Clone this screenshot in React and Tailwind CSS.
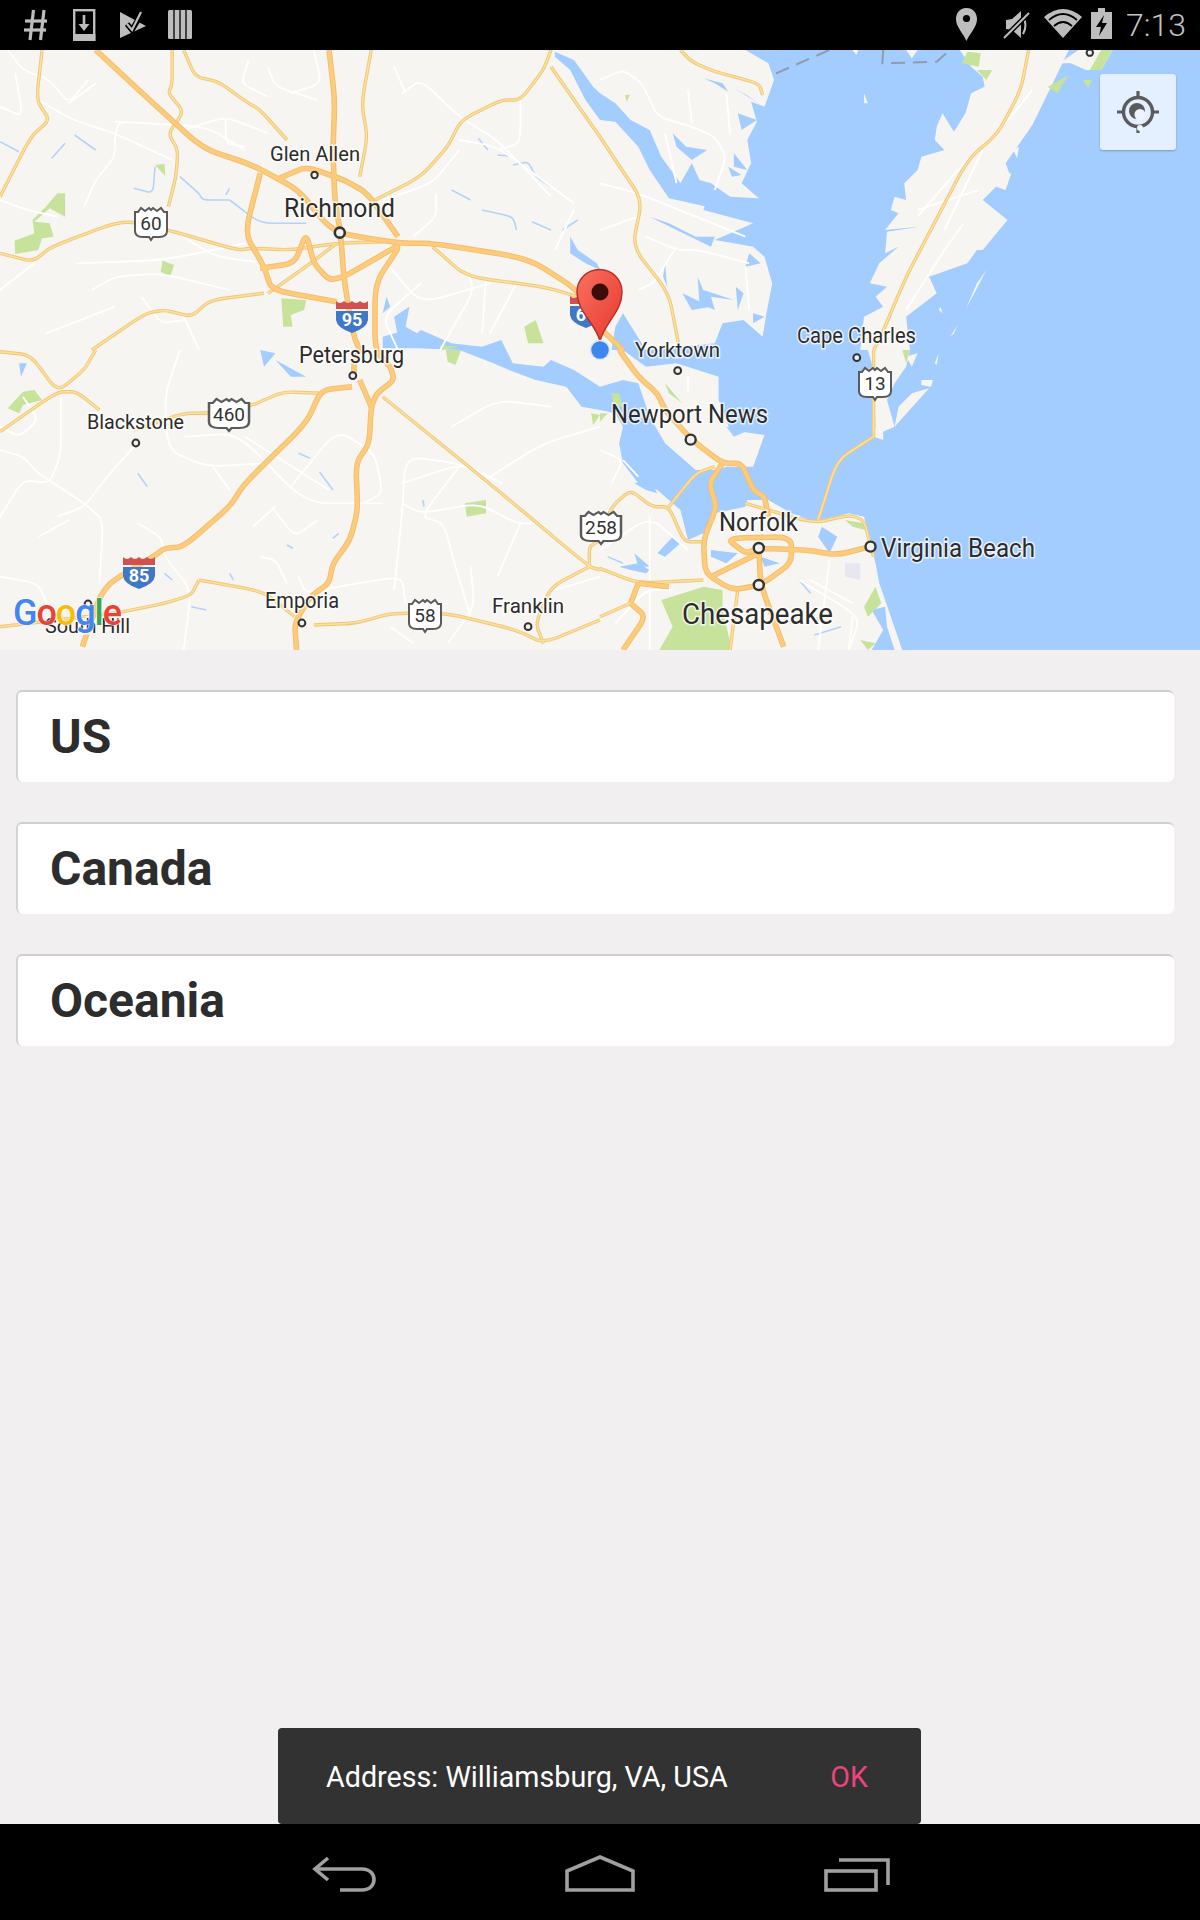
import React from "react";

const T = { a: [0, 50], b: [600, 50], c: [0, 350], d: [600, 350] };
const SX = 2.6133;
function conv(t, x, y) {
  return [T[t][0] + x / SX, T[t][1] + y / 3];
}
function XY(s) {
  let t = "a";
  return s.trim().split(/\s+/).map((k) => {
    const m = k.match(/^([abcd]):(.*)$/);
    if (m) { t = m[1]; k = m[2]; }
    const [x, y] = k.split(",").map(Number);
    return conv(t, x, y);
  });
}
function P(s) {
  return XY(s).map(([X, Y]) => `${X.toFixed(1)},${Y.toFixed(1)}`).join(" ");
}
// rounded line through the listed points, for roads
function S(s) {
  const pts = XY(s);
  if (pts.length < 3) return "M" + pts.map((p) => p.map((n) => n.toFixed(1)).join(" ")).join(" L");
  let d = `M${pts[0][0].toFixed(1)} ${pts[0][1].toFixed(1)}`;
  for (let i = 1; i < pts.length - 1; i++) {
    const [ax, ay] = pts[i - 1];
    const [bx, by] = pts[i];
    const [cx, cy] = pts[i + 1];
    const f = 0.3;
    d += ` L${(bx + (ax - bx) * f).toFixed(1)} ${(by + (ay - by) * f).toFixed(1)}`;
    d += ` Q${bx.toFixed(1)} ${by.toFixed(1)} ${(bx + (cx - bx) * f).toFixed(1)} ${(by + (cy - by) * f).toFixed(1)}`;
  }
  const l = pts[pts.length - 1];
  return d + ` L${l[0].toFixed(1)} ${l[1].toFixed(1)}`;
}

const LAND = [
  "a:0,0 b:380,0 440,40 455,90 430,170 395,155 410,215 385,270 395,340 370,400 415,445 280,450 270,480 400,520 300,570 350,580 400,590 430,620 450,700 435,790 425,860 375,810 320,820 300,880 120,900 60,790 40,830 b:30,900 d:60,0 120,50 200,40 310,80 310,150 340,240 430,255 400,350 380,450 440,450 500,490 560,515 650,490 690,500 720,640 730,700 790,900 c:0,900",
  "b:940,0 970,50 1000,80 1005,110 970,130 955,190 925,245 895,190 880,230 875,270 900,300 840,320 830,360 795,400 800,450 770,440 760,480 780,490 745,540 835,530 750,545 745,610 780,590 730,640 705,700 750,710 720,740 740,770 690,800 680,900 d:700,0 715,60 720,230 715,260 740,270 740,245 770,230 750,150 770,100 800,50 810,0 b:800,800 880,730 860,680 960,640 985,600 1000,600 1065,510 1000,450 1070,370 1060,340 1130,225 1200,60 1225,0",
  "b:1200,40 1250,0 1340,0 1310,60 1270,60 1230,40",
  "d:770,230 860,115 815,130 780,170",
  "d:840,90 870,90 865,110 840,105",
  "d:800,20 830,10 815,50",
  "d:875,40 885,10 880,45",
  "b:1010,660 955,780 985,700",
  "b:1080,300 1095,290 1090,325",
  "b:1035,375 1075,370 1060,420 1035,410",
  "b:890,770 895,790 885,780",
  "b:915,860 935,825 925,850",
  "b:690,130 700,160 690,160",
  "b:660,0 675,0 670,15",
  "b:800,0 830,0 815,25",
];

const WATER = [
  "a:1000,860 1060,840 1090,850 1100,840 1180,880 1260,890 1310,870 c:1340,40 1420,50 1440,30 1500,60 1568,110 d:60,90 100,100 130,200 170,280 250,360 300,360 330,350 400,350 385,450 380,470 300,490 270,550 230,570 210,480 150,420 100,400 60,340 50,280 60,230 40,190 0,180 c:1520,170 1480,110 1400,90 1330,60 1290,40 a:1200,900 1090,895 1000,895",
  "a:1450,5 1500,30 1550,110 1568,130 b:40,160 80,210 130,240 160,320 210,400 240,340 260,390 290,400 340,440 415,445 280,470 180,445 130,360 100,290 40,215 0,210 a:1530,150 1490,60 1450,20",
  "b:130,500 200,540 290,590 300,560 250,560 180,520",
  "a:1490,560 1510,600 1560,640 1568,660 1530,640 1490,610",
  "b:270,85 320,100 335,125 300,100",
  "b:345,110 400,150 425,170 390,140",
  "b:190,250 225,290 280,300 240,330 200,290",
  "b:215,730 290,770 240,780",
  "b:255,680 270,720 350,750 290,740 300,780 260,760",
  "b:350,310 385,360 350,350",
  "b:335,350 370,375 345,380",
  "b:360,190 410,210 370,240",
  "b:170,640 175,710 165,680",
  "b:355,710 375,730 360,780",
  "b:400,790 430,800 400,820",
  "b:390,610 420,640 380,650",
  "d:90,400 130,390 150,430 120,420",
  "d:50,650 100,640 130,660 120,670 80,660",
  "d:90,610 130,650 100,650",
  "d:290,600 360,610 330,640 290,620",
  "d:420,620 470,640 430,650",
  "d:580,530 620,560 600,610 570,560",
  "d:150,610 190,560 210,580 170,620",
  "d:330,230 390,240 350,260",
  "d:710,780 745,770 750,830 770,900 710,900 740,840",
  "a:1010,740 1020,770 1000,790",
  "a:1030,800 1070,770 1060,830 1090,850 1040,860",
  "c:50,40 70,40 55,80",
  "c:680,0 720,10 690,50",
  "c:720,30 800,80 760,80",
];

const HIGHWAY = [
  "a:250,0 400,160 530,295 660,345 780,420 850,520 890,550 960,565 1050,580 1130,580 1380,625 1510,720 1555,820 b:60,900 d:50,0 100,80 150,130 170,180 240,270 320,340 370,340 400,420 430,440 440,500",
  "a:860,0 875,150 870,300 875,450 890,550 900,700 925,860 940,900 c:925,40 925,70",
  "c:920,110 840,120 800,220 640,400 600,470 480,590 430,595 400,620 270,710 215,890",
  "a:680,370 640,550 690,650 710,720 880,755",
  "a:680,655 770,640 800,550 820,640 860,690 900,680 975,630 1050,580 980,700 980,900 c:1020,50 1030,90 985,130 970,170 965,280 930,340 935,480 915,570 870,640 860,700 810,740 770,820 775,900",
  "a:730,385 800,350 900,390 960,430 1040,560",
  "c:940,90 970,170",
  "d:320,340 285,400 305,470 270,570 275,670 345,720 420,705 500,640 500,560 330,565 380,610 415,595 540,600 620,615 705,590",
  "d:415,595 420,705 480,890",
  "d:290,680 415,610",
  "d:100,700 180,710",
  "d:80,760 120,800 60,900",
  "d:100,700 80,760",
];

const ARTERIAL = [
  "a:110,0 95,150 130,210 80,260 0,440",
  "a:450,0 450,100 440,130 480,185 440,250 465,300 460,380 440,470",
  "a:480,0 510,80 570,95 650,160 680,180 750,270",
  "a:970,0 945,160 960,260 940,380",
  "a:1440,0 1420,60 1360,150 1310,150 1205,210 1170,290 1100,380 980,450",
  "a:1440,50 1500,150 1568,260 b:40,330 110,450 85,590 180,730 205,880",
  "b:210,0 240,35 300,65 415,100 425,135",
  "a:0,610 85,635 135,590 320,510 440,540 620,600 660,595 760,600 880,580 1000,575",
  "a:700,730 800,650 880,580",
  "a:1130,590 1220,680 1420,710 1510,740",
  "a:240,900 380,790 430,780 500,800 550,750 690,730",
  "c:0,245 150,125 200,125 260,180",
  "c:0,5 80,15 150,125 220,60 250,0",
  "c:350,240 480,190 545,190 650,170 740,125 840,130",
  "c:1000,140 1300,420 1540,650 1568,660 d:0,655 100,700 270,690",
  "c:1540,650 1540,590 1568,570 d:30,470 80,420 135,470 180,470 220,575 270,575",
  "d:180,470 250,370 300,350",
  "c:520,690 690,725 770,800",
  "c:520,690 500,735 430,760 300,790 0,830",
  "c:820,825 930,820 1020,790 1170,790 1350,840 1420,880 1568,810",
  "c:1540,650 1440,710 1400,820 1420,880",
  "d:715,260 620,330 570,510",
  "d:715,0 715,260",
  "b:1120,0 1100,120 1040,250 960,330 860,550 800,680 730,870 715,900",
  "d:380,460 560,520 650,495 690,510 715,620",
  "d:0,800 80,760",
  "d:340,900 360,720",
];

const WHITE = [
  "a:20,0 60,60 130,90 180,160 230,90",
  "a:100,150 190,210 300,250 450,330",
  "a:330,215 310,220 300,260 300,320 250,390 220,470",
  "a:300,215 540,230 640,300",
  "a:0,450 70,480 150,500",
  "a:200,640 430,630 640,580",
  "a:0,720 90,640",
  "a:240,720 300,680 420,670 600,720",
  "a:370,740 420,820 480,810",
  "a:480,240 590,200 700,250",
  "a:590,210 590,280 640,290",
  "a:650,30 630,100 700,140",
  "a:700,50 720,110 830,150",
  "a:1050,130 1100,90 1200,200 1300,270 1440,440",
  "a:1200,270 1300,290 1500,460",
  "a:1060,130 1030,50",
  "a:1000,450 1130,400 1200,300",
  "a:1140,430 1140,500 1080,560",
  "a:1130,590 1250,700 1150,900",
  "a:1270,690 1260,850",
  "a:1350,700 1280,850",
  "a:1360,150 1360,280 1300,300",
  "a:1500,480 1450,600",
  "a:400,500 560,620 700,640",
  "a:0,170 60,200 40,70",
  "a:250,100 180,160",
  "a:820,0 840,100 760,130",
  "a:1100,700 1000,800 1040,900",
  "a:1010,640 1100,760 1280,700",
  "a:480,800 520,900",
  "a:120,850 300,770",
  "b:0,90 60,60 110,100 150,200 240,230 300,260 330,320 300,420",
  "b:170,250 200,400",
  "b:0,400 100,430 230,490 380,560",
  "b:0,540 100,500",
  "b:120,560 200,600 260,600 390,640",
  "b:200,590 140,700 100,720",
  "b:380,650 390,780",
  "b:230,120 240,220",
  "b:330,130 340,250",
  "b:1130,120 1060,220 950,340 830,500",
  "b:830,480 990,420",
  "b:800,780 900,600 950,520",
  "b:1000,300 900,540",
  "c:0,300 60,320 100,370 140,400 220,460 270,510 260,700",
  "c:60,140 100,210 50,260 0,230",
  "c:160,140 160,310 130,400 60,390 0,500",
  "c:350,290 280,380 220,470 150,500",
  "c:470,0 430,140 440,300 540,350 690,340",
  "c:550,340 600,420",
  "c:480,260 620,250 800,460 1000,460",
  "c:640,260 860,420",
  "c:760,410 880,240 980,310 1000,430 950,460",
  "c:720,470 660,530",
  "c:710,470 770,560 830,510",
  "c:100,560 180,510",
  "c:360,520 420,560 430,620 500,720 480,900",
  "c:1050,400 1210,340 1330,410 1200,340 1060,320 1050,500 1030,720",
  "c:1200,350 1100,500 1160,520 1190,650 1230,800",
  "c:1280,380 1420,280 1568,230",
  "c:1180,230 1300,150 1440,170",
  "c:1050,460 1100,490 1250,460 1350,520 1400,520",
  "c:0,680 100,700 130,780",
  "c:780,680 800,730 930,700 1050,680 1060,760",
  "c:680,620 720,630 750,700",
  "c:1170,880 1240,770 1230,650",
  "c:1450,720 1568,680",
  "c:1360,520 1300,680",
  "c:1020,830 1080,880",
  "d:0,300 60,330 30,400",
  "d:60,330 100,380",
  "d:130,500 130,900",
  "d:0,600 130,500 230,600",
  "d:130,470 180,470",
  "d:230,80 230,130",
  "d:520,690 680,800 650,900",
  "d:550,690 660,760",
  "d:600,630 570,900",
  "d:40,820 120,720 190,720",
  "d:650,900 660,800",
];

const PARKS = [
  "a:150,430 170,430 170,500 130,475 90,515 130,520 140,560 110,565 100,600 40,612 38,572 90,550 85,510 120,470",
  "a:425,632 455,645 445,680 420,665",
  "a:405,345 430,342 432,378",
  "a:735,745 800,750 795,780 760,795 765,830 740,830",
  "a:1370,830 1400,810 1420,880 1380,880",
  "c:20,175 60,125 90,120 110,150 60,165 50,190",
  "c:1215,460 1270,450 1270,490 1220,500",
  "c:1165,0 1205,0 1190,45 1170,35",
  "c:1545,190 1568,195 1550,225",
  "a:1150,885 1200,890 1150,900",
  "d:160,750 270,710 320,720 320,780 345,900 155,900 190,830",
  "d:30,130 50,130 60,170 35,165",
  "d:170,100 200,140 215,160 180,130",
  "d:640,510 690,520 695,540 660,530",
  "d:720,710 735,760 700,800 690,770",
  "d:680,870 720,880 700,900",
  "d:790,0 810,0 800,40",
  "d:0,190 20,190 0,215",
  "b:945,40 960,5 995,10 990,50",
  "b:985,60 1025,60 1010,90",
  "b:1170,110 1225,75 1195,130",
  "b:1262,90 1285,90 1275,115",
  "b:1280,60 1310,0 1340,0 1310,60",
  "b:65,135 78,135 70,155",
];

const CREEKS = [
  "a:0,275 50,305",
  "a:195,255 250,300",
  "a:135,325 170,280",
  "a:350,415 400,430 405,350",
  "a:470,380 520,430 530,450 600,450",
  "a:600,450 680,520 800,520",
  "a:590,435 600,415",
  "a:1250,265 1275,300",
  "a:1300,315 1330,318",
  "a:1340,345 1380,335 1400,380 1440,410",
  "a:1180,420 1230,450",
  "a:1260,480 1340,500 1350,540",
  "a:1390,515 1440,540",
  "a:1470,540 1510,510",
  "c:360,370 385,410",
  "c:780,310 810,325",
  "c:835,365 870,420",
  "c:870,565 885,550",
  "c:750,585 765,595",
  "c:600,670 610,690",
  "c:430,670 450,690",
  "c:500,770 540,780",
  "c:1105,450 1108,470",
  "d:520,690 550,730",
  "d:560,855 630,830",
  "d:60,640 20,620",
];

const DOTS = [
  ["a", 822, 375, 3.2, 2], ["a", 888, 548, 5, 2.6], ["c", 922, 77, 3.4, 2], ["c", 355, 279, 3.4, 2],
  ["c", 789, 819, 3.4, 2], ["c", 1380, 830, 3.4, 2], ["c", 230, 762, 3.4, 2], ["d", 203, 62, 3.4, 2],
  ["d", 671, 23, 3.4, 2], ["d", 237, 269, 5, 2.4], ["d", 415, 594, 5, 2.4], ["d", 415, 705, 5, 2.4],
  ["d", 707, 590, 5, 2.4], ["b", 1280, 8, 3.2, 2],
];

const LABELS = [
  ["Glen Allen", 270, 161, 90, 21],
  ["Richmond", 284, 217, 111, 26],
  ["Petersburg", 299, 363, 105, 23],
  ["Blackstone", 87, 429, 97, 21],
  ["Emporia", 265, 608, 74, 22],
  ["Franklin", 492, 613, 72, 21],
  ["South Hill", 45, 633, 85, 21],
  ["Yorktown", 635, 357, 85, 21],
  ["Newport News", 611, 423, 157, 26],
  ["Norfolk", 719, 531, 79, 26],
  ["Virginia Beach", 881, 557, 154, 26],
  ["Chesapeake", 682, 624, 151, 29],
  ["Cape Charles", 797, 343, 119, 22],
];

function UsShield({ x, y, label, sx = 1 }) {
  return (
    <g transform={`translate(${x} ${y})`}>
      <g transform={`scale(${sx} 1)`}>
        <path
          d="M-16,-11 L-13,-11 L-10,-15 L-6,-12 L-2,-15 L0,-13 L2,-15 L6,-12 L10,-15 L13,-11 L16,-11 L16,8 Q16,14 8,14 L2,14 L0,17 L-2,14 L-8,14 Q-16,14 -16,8 Z"
          fill="#ffffff"
          stroke="#5a5a5a"
          strokeWidth="2"
        />
      </g>
      <text x="0" y="7" textAnchor="middle" fontSize="19" fill="#333333">{label}</text>
    </g>
  );
}

function Interstate({ x, y, label }) {
  return (
    <g transform={`translate(${x} ${y})`}>
      <path d="M-16,-16 Q-12,-12 -8,-16 Q-4,-12 0,-16 Q4,-12 8,-16 Q12,-12 16,-16 L16,-8 L-16,-8 Z" fill="#cf5150" />
      <path d="M-16,-6 L16,-6 L16,3 Q15,11 0,16 Q-15,11 -16,3 Z" fill="#3f78c6" />
      <text x="0" y="9" textAnchor="middle" fontSize="18" fontWeight="700" fill="#ffffff">{label}</text>
    </g>
  );
}

function MapDrawing() {
  return (
    <svg width="1200" height="600" viewBox="0 50 1200 600" className="block">
      <defs>
        <linearGradient id="pinfill" x1="0" y1="0" x2="1" y2="1">
          <stop offset="0" stopColor="#f9705f" />
          <stop offset="1" stopColor="#e8392e" />
        </linearGradient>
      </defs>
      <rect x="0" y="50" width="1200" height="600" fill="#a3ccff" />
      {LAND.map((s, i) => (
        <polygon key={i} points={P(s)} fill="#f7f5f1" />
      ))}
      {WATER.map((s, i) => (
        <polygon key={i} points={P(s)} fill="#a3ccff" />
      ))}
      {PARKS.map((s, i) => (
        <polygon key={i} points={P(s)} fill="#c6e29b" />
      ))}
      <polygon points={P("d:640,640 680,640 680,690 640,680")} fill="#e8e6ee" />
      {CREEKS.map((s, i) => (
        <path key={i} d={S(s)} fill="none" stroke="#b3d3fb" strokeWidth="1.6" />
      ))}
      {WHITE.map((s, i) => (
        <path key={i} d={S(s)} fill="none" stroke="#ffffff" strokeWidth="1.8" strokeLinejoin="round" />
      ))}
      <polyline points={P("b:460,70 600,0")} fill="none" stroke="#8f9cae" strokeWidth="2" strokeDasharray="14 8" />
      <polyline points={P("b:740,0 738,40 880,35 905,10")} fill="none" stroke="#8f9cae" strokeWidth="2" strokeDasharray="14 8" />
      {ARTERIAL.map((s, i) => (
        <path key={i} d={S(s)} fill="none" stroke="#efc678" strokeWidth="3.4" strokeLinejoin="round" />
      ))}
      {ARTERIAL.map((s, i) => (
        <path key={i} d={S(s)} fill="none" stroke="#fbe19c" strokeWidth="1.6" strokeLinejoin="round" />
      ))}
      {HIGHWAY.map((s, i) => (
        <path key={i} d={S(s)} fill="none" stroke="#f3bd6c" strokeWidth="5.6" strokeLinejoin="round" />
      ))}
      {HIGHWAY.map((s, i) => (
        <path key={i} d={S(s)} fill="none" stroke="#fccb7c" strokeWidth="3.8" strokeLinejoin="round" />
      ))}
      {DOTS.map(([t, x, y, r, w], i) => {
        const [X, Y] = conv(t, x, y);
        return <circle key={i} cx={X} cy={Y} r={r} fill="#f1f1f1" stroke="#333333" strokeWidth={w} />;
      })}
      {LABELS.map(([t, x, y, len, size]) => (
        <text
          key={t}
          x={x}
          y={y}
          fontSize={size}
          textLength={len}
          lengthAdjust="spacingAndGlyphs"
          fill="#2c2c2c"
          stroke="#ffffff"
          strokeOpacity="0.75"
          strokeWidth="3"
          paintOrder="stroke"
        >
          {t}
        </text>
      ))}
      <UsShield x={151} y={223} label="60" />
      <UsShield x={229} y={414} label="460" sx={1.25} />
      <UsShield x={425} y={615} label="58" />
      <UsShield x={601} y={527} label="258" sx={1.25} />
      <UsShield x={875} y={383} label="13" />
      <Interstate x={352} y={317} label="95" />
      <Interstate x={139} y={573} label="85" />
      <Interstate x={586} y={312} label="64" />
      <path
        d="M600,341 C595,322 577,312 577,292 A22.5,22.5 0 1 1 622,292 C622,312 605,322 600,341 Z"
        fill="url(#pinfill)"
        stroke="#b82f28"
        strokeWidth="1.5"
      />
      <circle cx="600" cy="292" r="8.5" fill="#3a0d0b" />
      <circle cx="600" cy="350" r="9.5" fill="#3c86ee" stroke="#dbe8fb" strokeWidth="1.5" />
      <text x="13" y="625" fontSize="36" fontWeight="500" stroke="#ffffff" strokeOpacity="0.7" strokeWidth="1.5" paintOrder="stroke" textLength="109" lengthAdjust="spacing">
        <tspan fill="#4285f4">G</tspan>
        <tspan fill="#ea4335">o</tspan>
        <tspan fill="#fbbc05">o</tspan>
        <tspan fill="#4285f4">g</tspan>
        <tspan fill="#34a853">l</tspan>
        <tspan fill="#ea4335">e</tspan>
      </text>
    </svg>
  );
}

function LeftStatus() {
  return (
    <svg width="200" height="50" viewBox="0 0 200 50" fill="none">
      <g stroke="#bdbdbd" strokeWidth="3.2">
        <path d="M33.5 10 L30 40" />
        <path d="M44 10 L40.5 40" />
        <path d="M25 21 H47" />
        <path d="M24 30 H46" />
      </g>
      <rect x="74.2" y="10.2" width="20" height="29.6" stroke="#bdbdbd" strokeWidth="2.4" />
      <rect x="73" y="34" width="22.4" height="7" fill="#bdbdbd" />
      <path d="M84 15 V28" stroke="#bdbdbd" strokeWidth="2.6" />
      <path d="M78.5 24 L84 31 L89.5 24 Z" fill="#bdbdbd" />
      <path d="M120 12 L146 26 L120 38 Z" fill="#bdbdbd" />
      <path d="M127 24 L132 30 L142 13" stroke="#000000" strokeWidth="5.5" />
      <path d="M127 24 L132 30 L141 12" stroke="#bdbdbd" strokeWidth="2.2" />
      <rect x="168" y="10" width="24" height="29" rx="1.5" fill="#bdbdbd" />
      <path d="M174 10 V39 M180 10 V39 M186 10 V39" stroke="#000000" strokeWidth="1.3" />
    </svg>
  );
}

function RightStatus() {
  return (
    <svg width="160" height="50" viewBox="956 0 160 50" fill="none">
      <path d="M968.5 8 C961 8 958 14 958 19 C958 27 965 33 968.5 41 C972 33 979 27 979 19 C979 14 976 8 968.5 8 Z" fill="#bdbdbd" />
      <circle cx="968.5" cy="18.5" r="3.6" fill="#000000" />
      <path d="M1008 20 L1014 19 L1023 11 V38 L1014 30 L1008 29 Z" fill="#bdbdbd" />
      <path d="M1025 17 Q1030 25 1025 34" stroke="#bdbdbd" strokeWidth="2" />
      <path d="M1031 13 L1006 38" stroke="#000000" strokeWidth="5" />
      <path d="M1031 13 L1006 38" stroke="#bdbdbd" strokeWidth="2" />
      <path d="M1046 17 Q1065 1 1084 17 L1065 38 Z" fill="#bdbdbd" />
      <path d="M1051 20 Q1065 8 1079 20" stroke="#000000" strokeWidth="1.8" />
      <path d="M1056 26 Q1065 18 1074 26" stroke="#000000" strokeWidth="1.8" />
      <path d="M1100 8 H1107 V12 H1114 V39 H1093 V12 H1100 Z" fill="#bdbdbd" />
      <path d="M1106 15 L1098 27 H1103 L1101 36 L1109 23 H1104 Z" fill="#000000" />
    </svg>
  );
}

function LocateIcon() {
  return (
    <svg width="44" height="44" viewBox="0 0 44 44" fill="none">
      <circle cx="22" cy="22" r="14.5" stroke="#5b5b5b" strokeWidth="3.4" />
      <path d="M22 1 V8 M22 36 V43 M1 22 H8 M36 22 H43" stroke="#5b5b5b" strokeWidth="3.2" />
      <circle cx="21" cy="21" r="8" fill="#5b5b5b" />
      <circle cx="24" cy="24.5" r="5.5" fill="#eef5ff" />
      <circle cx="24" cy="38" r="3" fill="#eef5ff" />
    </svg>
  );
}

function Card({ label }) {
  return (
    <div className="h-[92px] rounded-[6px] bg-white border-t-2 border-l-2 border-t-[#cfcfcf] border-l-[#d4d4d4] flex items-center pl-[32px] text-[48px] leading-none font-bold text-[#2d2d2d]">
      {label}
    </div>
  );
}

export default function App() {
  return (
    <div className="relative w-[1200px] h-[1920px] flex flex-col bg-[#f1eff0] overflow-hidden [font-family:Roboto,sans-serif]">
      <div className="h-[50px] bg-black flex items-center justify-between shrink-0">
        <LeftStatus />
        <div className="flex items-center pr-[14px]">
          <RightStatus />
          <span className="ml-[12px] text-[32px] leading-none font-light text-[#c4c4c4]">7:13</span>
        </div>
      </div>
      <div className="relative h-[600px] shrink-0">
        <MapDrawing />
        <div className="absolute top-[24px] right-[24px] w-[76px] h-[76px] rounded-[3px] bg-[#e4f0ff] shadow-[0_1px_2px_rgba(0,0,0,0.25)] flex items-center justify-center">
          <LocateIcon />
        </div>
      </div>
      <div className="flex-1 flex flex-col">
        <div className="flex flex-col gap-[40px] pt-[40px] pl-[16px] pr-[26px]">
          <Card label="US" />
          <Card label="Canada" />
          <Card label="Oceania" />
        </div>
        <div className="flex-1 flex items-end justify-center pr-px">
          <div className="w-[643px] h-[96px] bg-[#323232] rounded-[4px] flex items-center justify-between pl-[48px] pr-[53px] pt-[3px] text-[28.7px] leading-none">
            <span className="text-white">Address: Williamsburg, VA, USA</span>
            <span className="text-[#e9457f]">OK</span>
          </div>
        </div>
      </div>
      <div className="h-[96px] bg-black shrink-0 flex items-start justify-center gap-[189px] pt-[31px] pl-[1px]">
        <svg width="64" height="37" viewBox="0 0 64 37" fill="none" stroke="#a0a0a0" strokeWidth="3.6">
          <path d="M16 3 L3 14 L16 25" />
          <path d="M3 14 H50 C66 14 66 35 50 35 H28" />
        </svg>
        <svg width="70" height="37" viewBox="0 0 70 37" fill="none" stroke="#a0a0a0" strokeWidth="3.6">
          <path d="M2 35 V16 L35 2 L68 16 V35 Z" />
        </svg>
        <svg width="66" height="37" viewBox="0 0 66 37" fill="none" stroke="#a0a0a0" strokeWidth="3.6">
          <rect x="2" y="16" width="50" height="19" />
          <path d="M15 5 H64 V30" />
        </svg>
      </div>
    </div>
  );
}
